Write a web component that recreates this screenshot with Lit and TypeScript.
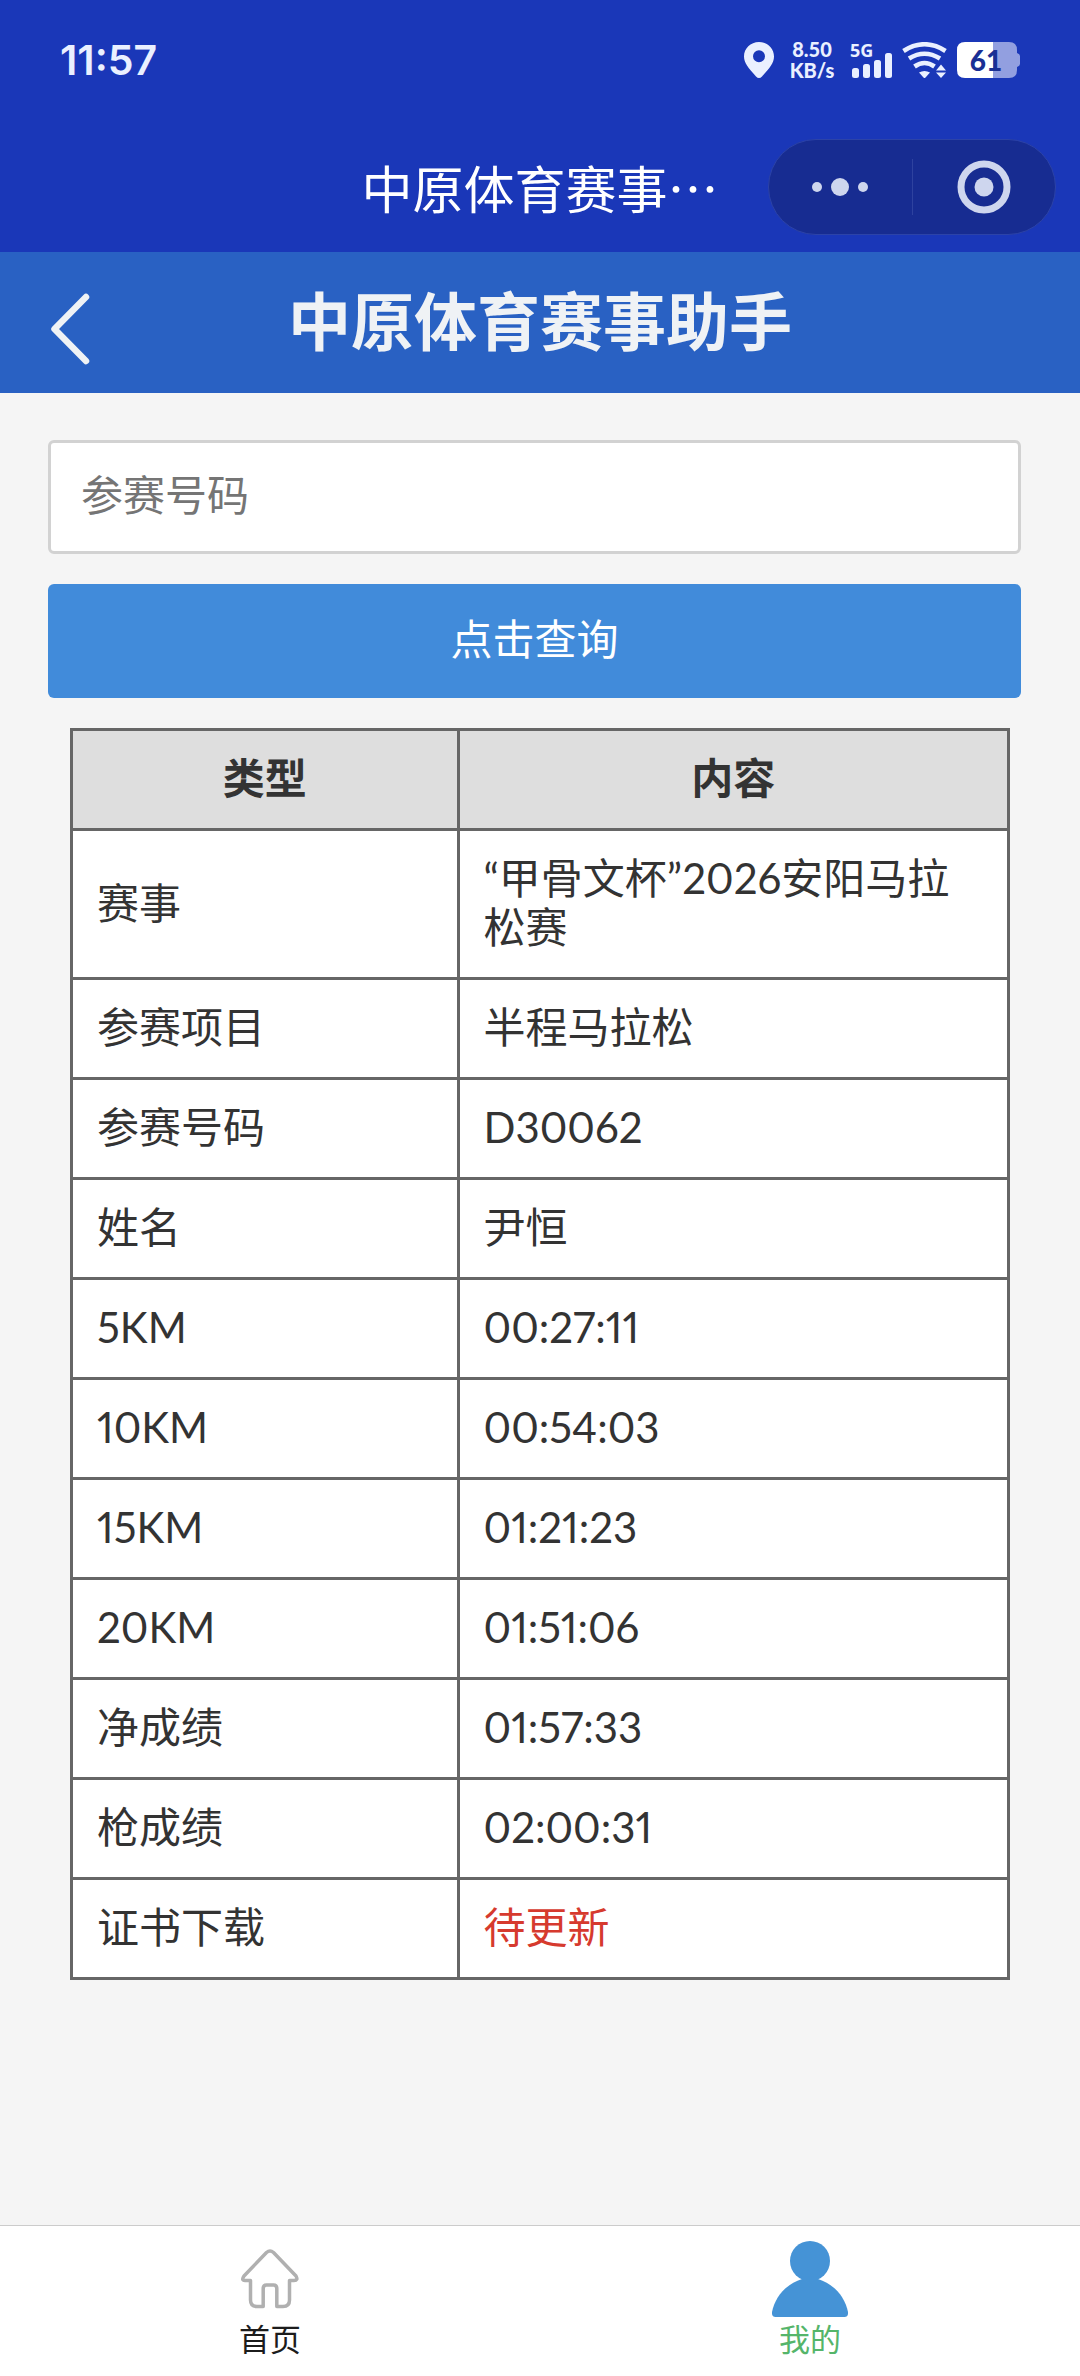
import { LitElement, html, css } from "lit";
import { customElement, property, state } from "lit/decorators.js";
import { classMap } from "lit/directives/class-map.js";

interface ResultRow {
  label: string;
  value: string;
  pending?: boolean;
}

@customElement("status-bar")
class StatusBar extends LitElement {
  static styles = css`
    :host {
      display: flex;
      align-items: center;
      justify-content: space-between;
      height: 36px;
      padding: 42px 60px 0 60px;
      color: #eaf0ff;
      font-family: Inter, "Noto Sans CJK SC", sans-serif;
    }
    .time {
      font-size: 41px;
      line-height: 36px;
      font-weight: 600;
    }
    .icons {
      display: flex;
      align-items: center;
      gap: 9px;
    }
    .speed {
      display: flex;
      flex-direction: column;
      width: 58px;
      text-align: center;
      font-family: Lato, sans-serif;
      font-size: 20px;
      line-height: 21px;
      font-weight: 900;
    }
    .signal,
    .battery {
      display: grid;
    }
    .signal > *,
    .battery > * {
      grid-area: 1 / 1;
    }
    .network {
      font-family: "Noto Sans", sans-serif;
      font-size: 18px;
      line-height: 16px;
      font-weight: 700;
    }
    .battery {
      width: 63px;
    }
    .level {
      width: 58px;
      text-align: center;
      font-family: Lato, sans-serif;
      font-size: 28px;
      line-height: 36px;
      font-weight: 900;
      color: #1a2f94;
    }
    svg {
      display: block;
    }
  `;

  render() {
    return html`
      <span class="time">11:57</span>
      <div class="icons">
        <svg width="30" height="36" viewBox="0 0 30 36" fill="currentColor" aria-hidden="true">
          <path fill-rule="evenodd" d="M15 0C6.500 0 0 6.500 0 14.500C0 21 4 25.500 12 34.500Q15 37.500 18 34.500C26 25.500 30 21 30 14.500C30 6.500 23.500 0 15 0ZM15 8.200a6 6 0 1 1 0 12a6 6 0 0 1 0-12Z" />
        </svg>
        <span class="speed"><span>8.50</span><span>KB/s</span></span>
        <span class="signal">
          <svg width="43" height="36" viewBox="0 0 43 36" fill="currentColor" aria-hidden="true">
            <rect x="2" y="26" width="7" height="10" rx="2.500" />
            <rect x="13" y="22" width="7" height="14" rx="2.500" />
            <rect x="24" y="18" width="7" height="18" rx="2.500" />
            <rect x="35" y="11" width="7" height="25" rx="2.500" />
          </svg>
          <span class="network">5G</span>
        </span>
        <svg width="46" height="36" viewBox="0 0 46 36" fill="none" stroke="currentColor" stroke-width="4.600" aria-hidden="true">
          <path d="M1.500 9Q22.500-4.500 43.500 9" />
          <path d="M7 16.500Q22.500 7 38 16.500" />
          <path d="M12.500 24.500Q22.500 17.500 32.500 24.500" />
          <path d="M17 30.500Q22.500 27.500 28 30.500L23.500 35.500Q22.500 36.500 21.500 35.500Z" fill="currentColor" stroke="none" />
          <path d="M34 28.500L39 22.500L44 28.500ZM34 30.500L39 36L44 30.500Z" fill="currentColor" stroke="none" />
        </svg>
        <span class="battery">
          <svg width="63" height="36" viewBox="0 0 63 36" aria-hidden="true">
            <path d="M36 0H52Q60 0 60 8V11Q63 12 63 14V22Q63 24 60 25V28Q60 36 52 36H36Z" fill="#929fe0" />
            <path d="M8 0H36V36H8Q0 36 0 28V8Q0 0 8 0Z" fill="#fff" />
          </svg>
          <span class="level">61</span>
        </span>
      </div>
    `;
  }
}

@customElement("app-capsule")
class AppCapsule extends LitElement {
  static styles = css`
    :host {
      display: flex;
      box-sizing: border-box;
      width: 288px;
      height: 96px;
      border: 1px solid #2c43a8;
      border-radius: 48px;
      background: #172c91;
      color: #ced6ee;
    }
    .action {
      flex: 1;
      display: flex;
      align-items: center;
      justify-content: center;
      margin: 0;
      padding: 0;
      border: 0;
      background: none;
      color: inherit;
    }
    .divider {
      width: 1px;
      margin: 19px 0;
      background: #2e429f;
    }
  `;

  render() {
    return html`
      <button class="action" aria-label="更多">
        <svg width="56" height="18" viewBox="0 0 56 18" fill="currentColor">
          <circle cx="5" cy="9" r="5" />
          <circle cx="28" cy="9" r="9" />
          <circle cx="51" cy="9" r="5" />
        </svg>
      </button>
      <span class="divider"></span>
      <button class="action" aria-label="关闭">
        <svg width="54" height="54" viewBox="0 0 54 54" fill="currentColor">
          <circle cx="27" cy="27" r="23" fill="none" stroke="currentColor" stroke-width="7" />
          <circle cx="27" cy="27" r="9.500" />
        </svg>
      </button>
    `;
  }
}

@customElement("result-table")
class ResultTable extends LitElement {
  @property({ attribute: false }) rows: ResultRow[] = [];

  static styles = css`
    :host {
      display: block;
    }
    .table {
      width: 100%;
      border-collapse: collapse;
      table-layout: fixed;
      background: #fff;
      color: #333;
      font-size: 42px;
      line-height: 49px;
      font-variant-numeric: proportional-nums;
    }
    .col-label {
      width: 41.250%;
    }
    .cell {
      padding: 23px 24px 25px;
      border: 3px solid #666;
      text-align: left;
      font-weight: 400;
    }
    .head {
      background: #dedede;
      text-align: center;
      font-weight: 700;
    }
    .pending {
      color: #d63a2e;
    }
  `;

  render() {
    return html`
      <table class="table">
        <colgroup>
          <col class="col-label" />
          <col />
        </colgroup>
        <thead>
          <tr>
            <th class="cell head" scope="col">类型</th>
            <th class="cell head" scope="col">内容</th>
          </tr>
        </thead>
        <tbody>
          ${this.rows.map(
            (row) => html`
              <tr>
                <th class="cell" scope="row">${row.label}</th>
                <td class=${classMap({ cell: true, pending: !!row.pending })}>${row.value}</td>
              </tr>
            `
          )}
        </tbody>
      </table>
    `;
  }
}

@customElement("app-root")
class AppRoot extends LitElement {
  @state() private rows: ResultRow[] = [
    { label: "赛事", value: "“甲骨文杯”2026安阳马拉松赛" },
    { label: "参赛项目", value: "半程马拉松" },
    { label: "参赛号码", value: "D30062" },
    { label: "姓名", value: "尹恒" },
    { label: "5KM", value: "00:27:11" },
    { label: "10KM", value: "00:54:03" },
    { label: "15KM", value: "01:21:23" },
    { label: "20KM", value: "01:51:06" },
    { label: "净成绩", value: "01:57:33" },
    { label: "枪成绩", value: "02:00:31" },
    { label: "证书下载", value: "待更新", pending: true },
  ];

  static styles = css`
    :host {
      display: flex;
      flex-direction: column;
      min-height: 100vh;
      background: #f5f5f5;
      font-family: Lato, "Noto Sans CJK SC", sans-serif;
    }
    .top {
      background: #1a37b8;
    }
    .title-row {
      display: grid;
      grid-template-columns: 1fr auto 1fr;
      align-items: center;
      padding: 61px 24px 17px;
    }
    .app-name {
      grid-column: 2;
      font-family: "Noto Sans CJK SC", sans-serif;
      font-size: 51px;
      line-height: 72px;
      color: #fff;
    }
    .capsule {
      justify-self: end;
    }
    .banner {
      display: grid;
      grid-template-columns: 1fr auto 1fr;
      align-items: center;
      height: 141px;
      background: #2961c3;
      color: #eff2f5;
    }
    .back {
      justify-self: start;
      margin: 0;
      padding: 12px 48px 0;
      border: 0;
      background: none;
      color: inherit;
    }
    .back svg {
      display: block;
    }
    .heading {
      margin: 0;
      padding-bottom: 10px;
      font-family: "Noto Sans CJK SC", sans-serif;
      font-size: 63px;
      line-height: 90px;
      font-weight: 700;
    }
    .content {
      flex: 1;
    }
    .form {
      display: flex;
      flex-direction: column;
      gap: 30px;
      padding: 47px 59px 30px 48px;
    }
    .field,
    .submit {
      box-sizing: border-box;
      width: 100%;
      height: 114px;
      margin: 0;
      border-radius: 6px;
      font-family: inherit;
      font-size: 42px;
      line-height: 49px;
    }
    .field {
      padding: 0 30px 4px;
      border: 3px solid #d2d2d2;
      background: #fff;
      color: #333;
    }
    .field::placeholder {
      color: #757575;
      opacity: 1;
    }
    .submit {
      padding: 0 0 4px;
      border: 0;
      background: #418bda;
      color: #fff;
    }
    .results {
      padding: 0 70px 48px;
    }
    .tabs {
      display: flex;
      box-sizing: border-box;
      height: 151px;
      border-top: 1px solid #ccc;
      background: #fff;
    }
    .tab {
      flex: 1;
      display: flex;
      flex-direction: column;
      align-items: center;
      padding-top: 15px;
      font-size: 31px;
      line-height: 44px;
      color: #1c1c1c;
      text-decoration: none;
    }
    .tab.active {
      color: #55b56a;
    }
  `;

  render() {
    return html`
      <header class="top">
        <status-bar></status-bar>
        <div class="title-row">
          <span class="app-name">中原体育赛事…</span>
          <app-capsule class="capsule"></app-capsule>
        </div>
      </header>
      <div class="banner">
        <button class="back" aria-label="返回">
          <svg width="44" height="72" viewBox="0 0 44 72" fill="none" stroke="currentColor" stroke-width="6.500" stroke-linecap="round" stroke-linejoin="round">
            <path d="M38 4L6.500 36L38 68" />
          </svg>
        </button>
        <h1 class="heading">中原体育赛事助手</h1>
      </div>
      <main class="content">
        <form class="form" @submit=${(e: Event) => e.preventDefault()}>
          <input class="field" type="text" aria-label="参赛号码" placeholder="参赛号码" />
          <button class="submit" type="submit">点击查询</button>
        </form>
        <div class="results">
          <result-table .rows=${this.rows}></result-table>
        </div>
      </main>
      <nav class="tabs">
        <a class="tab" href="#home">
          <svg width="76" height="76" viewBox="0 0 76 76" fill="none" stroke="#b0b0b0" stroke-width="3.500" stroke-linejoin="round" aria-hidden="true">
            <path d="M34.500 11.500Q38 8.500 41.500 11.500L64 35Q66.500 39.500 62 39.500H57.500V59Q57.500 65.500 51 65.500H44.800V47.500Q44.800 44 41.500 44H34.500Q31.200 44 31.200 47.500V65.500H25Q18.500 65.500 18.500 59V39.500H13Q9 39.500 12 35Z" />
          </svg>
          <span>首页</span>
        </a>
        <a class="tab active" href="#mine">
          <svg width="76" height="76" viewBox="0 0 76 76" fill="#4593d6" aria-hidden="true">
            <circle cx="38" cy="20" r="20" />
            <path d="M30 38H46C62 43 73 56 76 71Q76.500 76 72.500 76H3.500Q-.500 76 0 71C3 56 14 43 30 38Z" />
          </svg>
          <span>我的</span>
        </a>
      </nav>
    `;
  }
}
